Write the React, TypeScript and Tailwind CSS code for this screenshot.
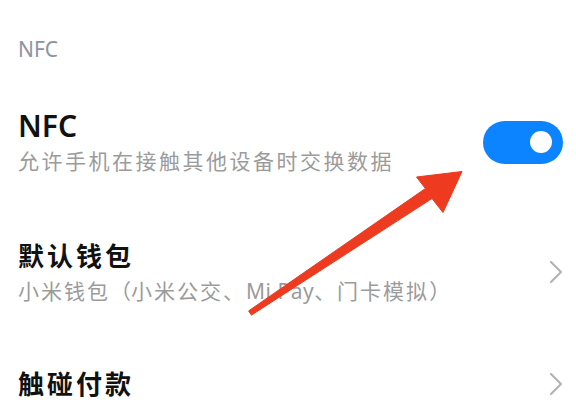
const font = { fontFamily: '"Noto Sans", "Noto Sans CJK SC", sans-serif' }

function Chevron() {
  return (
    <svg width="14" height="24" viewBox="0 0 14 24" fill="none" className="shrink-0">
      <path d="M2 2 L12 12 L2 22" stroke="#b3b3b3" strokeWidth="2.2" strokeLinecap="round" strokeLinejoin="round" />
    </svg>
  )
}

function Toggle({ on }: { on: boolean }) {
  return (
    <div className={`flex h-[43px] w-[80px] shrink-0 items-center rounded-full px-[11px] ${on ? "justify-end bg-[#0d84ff]" : "justify-start bg-[#e5e5e5]"}`}>
      <div className="h-[22px] w-[22px] rounded-full bg-white" />
    </div>
  )
}

// red annotation arrow pointing at the switch
function Arrow() {
  return (
    <svg className="pointer-events-none absolute inset-0" width="576" height="411" viewBox="0 0 576 411">
      <polygon
        points="248.6,310.9 425.4,188.5 416.5,177 462,171.5 443,212.5 432,198.5 251.4,315.1"
        fill="#ee3a1f"
        strokeLinejoin="round"
        stroke="#ee3a1f"
        strokeWidth="1"
      />
    </svg>
  )
}

export default function App() {
  return (
    <div className="relative h-[411px] w-[576px] overflow-hidden bg-white" style={font}>
      <div className="pl-[18px] pr-[13px]">
        <div className="pt-[37px] text-[21px] leading-[24px] text-[#8d94a1]">NFC</div>

        <div className="mt-[48px] flex items-center justify-between">
          <div className="flex flex-col">
            <span className="text-[30px] font-semibold leading-[34px] text-[#111]">NFC</span>
            <span className="mt-[4px] text-[21px] leading-[28px] tracking-[2.5px] text-[#9b9b9b]">允许手机在接触其他设备时交换数据</span>
          </div>
          <Toggle on />
        </div>

        <div className="mt-[64px] flex items-center justify-between">
          <div className="flex flex-col">
            <span className="text-[26px] font-semibold leading-[34px] tracking-[3px] text-[#111]">默认钱包</span>
            <span className="mt-[4px] text-[21px] leading-[28px] tracking-[2px] text-[#9b9b9b]">
              小米钱包<span className="tracking-normal">（</span>小米公交、<span className="tracking-[0.5px]">Mi Pay</span>、门卡模拟<span className="tracking-normal">）</span>
            </span>
          </div>
          <Chevron />
        </div>

        <div className="mt-[62px] flex items-center justify-between">
          <span className="text-[26px] font-semibold leading-[34px] tracking-[3px] text-[#111]">触碰付款</span>
          <Chevron />
        </div>
      </div>
      <Arrow />
    </div>
  )
}
